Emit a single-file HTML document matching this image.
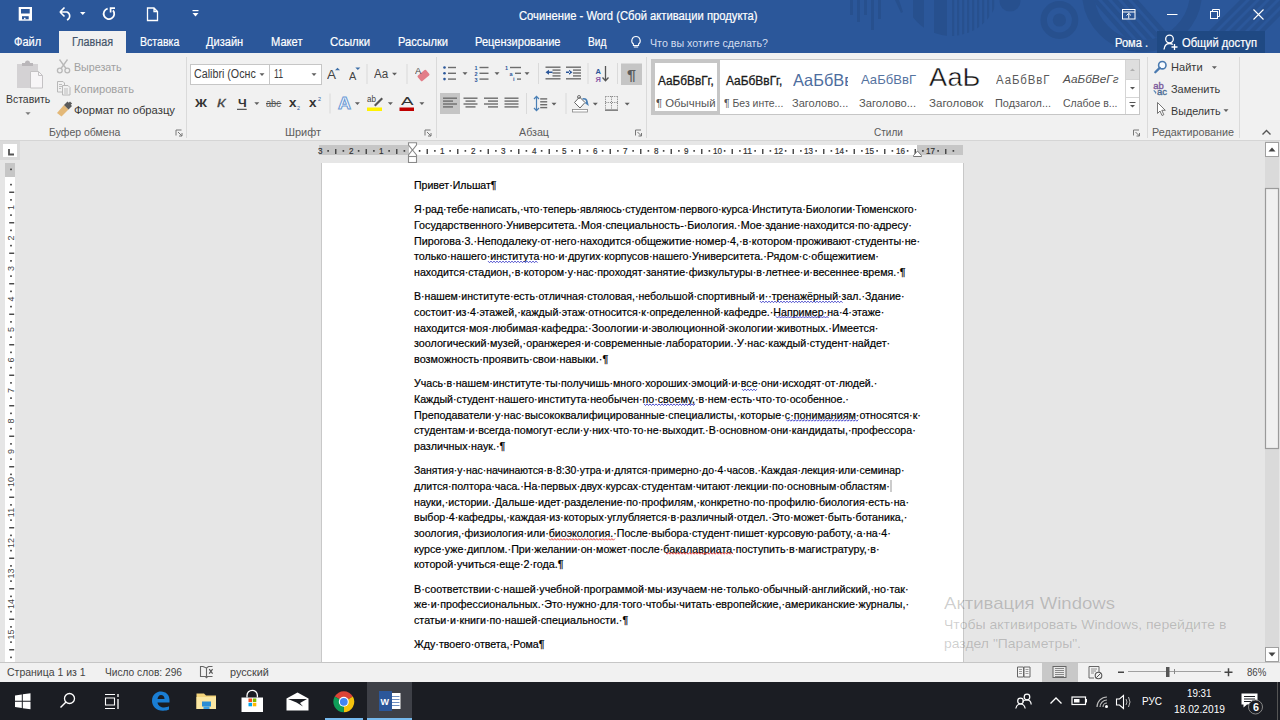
<!DOCTYPE html><html><head><meta charset="utf-8"><style>
*{margin:0;padding:0;box-sizing:border-box}
html,body{width:1280px;height:720px;overflow:hidden;background:#e6e6e6;font-family:"Liberation Sans",sans-serif;position:relative}
.a{position:absolute}
.t{position:absolute;white-space:pre;transform-origin:0 0}
svg{position:absolute;overflow:visible}
</style></head><body><div class="a" style="left:0px;top:0px;width:1280px;height:53px;background:#2b579a"></div>
<div class="a" style="left:0px;top:53px;width:1280px;height:87px;background:#f1f1f1"></div>
<div class="a" style="left:0px;top:140px;width:1280px;height:1px;background:#d5d5d5"></div>
<div class="a" style="left:0px;top:141px;width:1280px;height:521px;background:#e6e6e6"></div>
<div class="a" style="left:0px;top:662px;width:1280px;height:1px;background:#c6c6c6"></div>
<div class="a" style="left:0px;top:663px;width:1280px;height:20px;background:#f1f1f1"></div>
<div class="a" style="left:0px;top:682px;width:1280px;height:38px;background:#1b1d23"></div>
<svg style="left:0;top:0" width="1280" height="53"><rect x="850" y="0" width="3" height="15" fill="#27508e"/><rect x="857" y="0" width="3" height="22" fill="#27508e"/><rect x="864" y="0" width="3" height="15" fill="#27508e"/><rect x="871" y="0" width="3" height="30" fill="#27508e"/><rect x="878" y="0" width="3" height="19" fill="#27508e"/><defs><clipPath id="hd"><circle cx="951" cy="-12" r="48"/></clipPath></defs><g clip-path="url(#hd)"><rect x="913" y="0" width="11" height="40" fill="#27508e"/><rect x="934" y="0" width="13" height="40" fill="#27508e"/><rect x="952" y="0" width="2.2" height="40" fill="#27508e"/><rect x="957" y="0" width="2.2" height="40" fill="#27508e"/><rect x="962" y="0" width="2.2" height="40" fill="#27508e"/><rect x="967" y="0" width="2.2" height="40" fill="#27508e"/><rect x="972" y="0" width="2.2" height="40" fill="#27508e"/><rect x="977" y="0" width="2.2" height="40" fill="#27508e"/><rect x="982" y="0" width="2.2" height="40" fill="#27508e"/><rect x="987" y="0" width="2.2" height="40" fill="#27508e"/><rect x="992" y="0" width="2.2" height="40" fill="#27508e"/></g><path d="M895 0 L899 0 L903 12 L901 13 Z" fill="#27508e"/><circle cx="1010" cy="1" r="10.5" fill="#27508e"/><circle cx="1059.4" cy="20" r="15.7" fill="none" stroke="#27508e" stroke-width="6.4"/><circle cx="1059.4" cy="20" r="6.6" fill="#27508e"/><circle cx="1142" cy="-8" r="54" fill="none" stroke="#27508e" stroke-width="12"/><defs><clipPath id="br"><circle cx="1142" cy="-8" r="48"/></clipPath></defs><g clip-path="url(#br)"><path d="M1092 0 L1098 0 L1138 45 L1132 45 Z" fill="#27508e"/><path d="M1102 0 L1108 0 L1148 45 L1142 45 Z" fill="#27508e"/><path d="M1112 0 L1118 0 L1158 45 L1152 45 Z" fill="#27508e"/><path d="M1122 0 L1128 0 L1168 45 L1162 45 Z" fill="#27508e"/><path d="M1132 0 L1138 0 L1178 45 L1172 45 Z" fill="#27508e"/></g><path d="M1240 0 L1246 0 L1214 32 L1208 32 Z" fill="#27508e"/><path d="M1250 0 L1256 0 L1224 32 L1218 32 Z" fill="#27508e"/><path d="M1260 0 L1266 0 L1234 32 L1228 32 Z" fill="#27508e"/><path d="M1270 0 L1276 0 L1244 32 L1238 32 Z" fill="#27508e"/><path d="M1280 0 L1286 0 L1254 32 L1248 32 Z" fill="#27508e"/><path d="M1290 0 L1296 0 L1264 32 L1258 32 Z" fill="#27508e"/></svg>
<svg style="left:0;top:0" width="1280" height="53"><rect x="18.7" y="7" width="13.3" height="13.7" fill="#fff"/><rect x="21" y="9" width="8.7" height="4.5" fill="#2b579a"/><rect x="22" y="16.2" width="6.7" height="3.1" fill="#2b579a"/><rect x="24" y="17.8" width="1.5" height="1.5" fill="#fff"/><path d="M60 12 L64.5 7.5 M60 12 L64.5 16.5 M60.5 12 H67 A5 4.5 0 0 1 67 20" fill="none" stroke="#fff" stroke-width="1.6"/><path d="M80 12 H85.5 L82.75 15 Z" fill="#fff"/><path d="M107.65 8.6 A5.3 5.3 0 1 0 113 10.3" fill="none" stroke="#fff" stroke-width="1.8"/><path d="M110.6 12.6 V8.1 H115" fill="none" stroke="#fff" stroke-width="1.7"/><path d="M147.5 8 H154 L157.5 11.5 V20.5 H147.5 Z M154 8 V11.5 H157.5" fill="none" stroke="#fff" stroke-width="1.3"/><rect x="192.5" y="10" width="6" height="1.2" fill="#fff"/><path d="M192.5 13 H198.5 L195.5 16.5 Z" fill="#fff"/><rect x="1122.5" y="9.5" width="12.5" height="9.5" fill="none" stroke="#fff" stroke-width="1"/><path d="M1122.5 12 H1135" stroke="#fff" stroke-width="1"/><path d="M1128.75 18.5 V13.5 M1126.5 15.5 L1128.75 13.3 L1131 15.5" fill="none" stroke="#fff" stroke-width="1"/><rect x="1167" y="14" width="10.5" height="1" fill="#fff"/><rect x="1210.5" y="11.5" width="7" height="7" fill="none" stroke="#fff" stroke-width="1"/><path d="M1212.5 11.5 V9.5 H1219.5 V16.5 H1217.5" fill="none" stroke="#fff" stroke-width="1"/><path d="M1253.5 9.5 L1263.5 19.5 M1263.5 9.5 L1253.5 19.5" stroke="#fff" stroke-width="1.1"/></svg>
<div class="t" style="left:519.00px;top:9.59px;font-size:12.3px;line-height:12.3px;color:#ffffff;font-weight:400;font-family:'Liberation Sans',sans-serif;transform:scaleX(0.9134);-webkit-text-stroke:0.2px #fff;">Сочинение - Word (Сбой активации продукта)</div>
<div class="a" style="left:59px;top:31px;width:67px;height:22px;background:#f1f1f1"></div>
<div class="t" style="left:13.80px;top:36.39px;font-size:12.3px;line-height:12.3px;color:#ffffff;font-weight:400;font-family:'Liberation Sans',sans-serif;transform:scaleX(0.8996);-webkit-text-stroke:0.2px #ffffff;">Файл</div>
<div class="t" style="left:71.50px;top:36.39px;font-size:12.3px;line-height:12.3px;color:#44546a;font-weight:400;font-family:'Liberation Sans',sans-serif;transform:scaleX(0.8758);-webkit-text-stroke:0.2px #44546a;">Главная</div>
<div class="t" style="left:139.50px;top:36.39px;font-size:12.3px;line-height:12.3px;color:#ffffff;font-weight:400;font-family:'Liberation Sans',sans-serif;transform:scaleX(0.8596);-webkit-text-stroke:0.2px #ffffff;">Вставка</div>
<div class="t" style="left:205.80px;top:36.39px;font-size:12.3px;line-height:12.3px;color:#ffffff;font-weight:400;font-family:'Liberation Sans',sans-serif;transform:scaleX(0.8998);-webkit-text-stroke:0.2px #ffffff;">Дизайн</div>
<div class="t" style="left:271.00px;top:36.39px;font-size:12.3px;line-height:12.3px;color:#ffffff;font-weight:400;font-family:'Liberation Sans',sans-serif;transform:scaleX(0.9048);-webkit-text-stroke:0.2px #ffffff;">Макет</div>
<div class="t" style="left:330.00px;top:36.39px;font-size:12.3px;line-height:12.3px;color:#ffffff;font-weight:400;font-family:'Liberation Sans',sans-serif;transform:scaleX(0.9239);-webkit-text-stroke:0.2px #ffffff;">Ссылки</div>
<div class="t" style="left:397.50px;top:36.39px;font-size:12.3px;line-height:12.3px;color:#ffffff;font-weight:400;font-family:'Liberation Sans',sans-serif;transform:scaleX(0.9057);-webkit-text-stroke:0.2px #ffffff;">Рассылки</div>
<div class="t" style="left:475.00px;top:36.39px;font-size:12.3px;line-height:12.3px;color:#ffffff;font-weight:400;font-family:'Liberation Sans',sans-serif;transform:scaleX(0.9004);-webkit-text-stroke:0.2px #ffffff;">Рецензирование</div>
<div class="t" style="left:587.50px;top:36.39px;font-size:12.3px;line-height:12.3px;color:#ffffff;font-weight:400;font-family:'Liberation Sans',sans-serif;transform:scaleX(0.8315);-webkit-text-stroke:0.2px #ffffff;">Вид</div>
<svg style="left:630px;top:35px" width="12" height="14" viewBox="0 0 12 14" ><path d="M6 1.5 A4.2 4.2 0 0 1 8.6 9 V10.5 H3.4 V9 A4.2 4.2 0 0 1 6 1.5 Z M3.8 12 H8.2" fill="none" stroke="#ffffff" stroke-width="1.1"/></svg>
<div class="t" style="left:649.50px;top:37.77px;font-size:11.5px;line-height:11.5px;color:#d4def0;font-weight:400;font-family:'Liberation Sans',sans-serif;transform:scaleX(0.9281);">Что вы хотите сделать?</div>
<div class="t" style="left:1115.00px;top:36.84px;font-size:12px;line-height:12px;color:#ffffff;font-weight:400;font-family:'Liberation Sans',sans-serif;transform:scaleX(0.9231);-webkit-text-stroke:0.2px #fff;">Рома .</div>
<div class="a" style="left:1157px;top:31px;width:108px;height:22px;background:#1f4983"></div>
<svg style="left:1163px;top:34px" width="16" height="17" viewBox="0 0 16 17" ><circle cx="6.5" cy="5" r="3.8" fill="none" stroke="#fff" stroke-width="1.3"/><path d="M1 15.5 C1.5 11 4 9.5 6.5 9.5 C8 9.5 9 10 9.8 10.6" fill="none" stroke="#fff" stroke-width="1.3"/><path d="M11.5 10 V16 M8.5 13 H14.5" stroke="#fff" stroke-width="1.3"/></svg>
<div class="t" style="left:1182.00px;top:36.84px;font-size:12px;line-height:12px;color:#ffffff;font-weight:400;font-family:'Liberation Sans',sans-serif;transform:scaleX(0.9302);-webkit-text-stroke:0.2px #fff;">Общий доступ</div>
<svg style="left:0;top:0" width="1280" height="141"><rect x="186" y="57" width="1" height="81" fill="#dadada"/><rect x="436" y="57" width="1" height="81" fill="#dadada"/><rect x="646" y="57" width="1" height="81" fill="#dadada"/><rect x="1147" y="57" width="1" height="81" fill="#dadada"/><rect x="1239" y="57" width="1" height="81" fill="#dadada"/><rect x="17" y="64" width="21" height="24" fill="#d4d2d4"/><path d="M22 66 H33 V63 H30 A2.5 2.5 0 0 0 25 63 H22 Z" fill="#b9b6b9"/><path d="M30.5 71.5 H38.5 L42.5 75.5 V88 H30.5 Z" fill="#f7f5f7" stroke="#c4c2c4" stroke-width="1"/><path d="M38.5 71.5 V75.5 H42.5" fill="none" stroke="#c4c2c4" stroke-width="1"/><path d="M25.40 112.20 H30.60 L28.00 115.00 Z" fill="#7a7a7a"/><circle cx="59.8" cy="70.5" r="2.4" fill="none" stroke="#b8b8b8" stroke-width="1.3"/><circle cx="67.3" cy="70.5" r="2.4" fill="none" stroke="#b8b8b8" stroke-width="1.3"/><path d="M61 68.5 L67.5 59.5 M66 68.5 L59.5 59.5" stroke="#b8b8b8" stroke-width="1.3"/><path d="M57.5 81.5 H63 L64.5 83 V92 H57.5 Z" fill="none" stroke="#b8b8b8" stroke-width="1"/><path d="M62.5 85.5 H68 L70 87.5 V95 H62.5 Z" fill="#f1f1f1" stroke="#b8b8b8" stroke-width="1"/><path d="M59 84.5 H62 M59 86.5 H62 M59 88.5 H61 M64 89 H68 M64 91 H68 M64 93 H68" stroke="#b8b8b8" stroke-width="0.9"/><path d="M57 113 L64 105 L68.5 109.5 L61.5 116.5 Z" fill="#e3b878"/><path d="M64 105 L67.5 101.5 L72 106 L68.5 109.5 Z" fill="#5a5a5a"/><rect x="68.5" y="102" width="3" height="3" fill="#5a5a5a" transform="rotate(45 70 103.5)"/><path d="M176.0 135.5 V130.0 H181.5 M178.0 132.0 L182.0 136.0 M179.0 136.0 H182.0 V133.0" fill="none" stroke="#777" stroke-width="1"/><rect x="190.5" y="64.5" width="131" height="20" fill="#ffffff" stroke="#c6c6c6" stroke-width="1"/><rect x="269" y="65" width="1" height="19" fill="#c6c6c6"/><path d="M259.50 73.20 H264.50 L262.00 76.00 Z" fill="#5f5f5f"/><path d="M311.50 73.20 H316.50 L314.00 76.00 Z" fill="#5f5f5f"/><rect x="366.5" y="64" width="1" height="20" fill="#dadada"/><rect x="406.5" y="64" width="1" height="20" fill="#dadada"/><rect x="329.5" y="93.5" width="1" height="20" fill="#dadada"/><path d="M337.5 67.8 L340 70.3 H335 Z" fill="#3d6fa8"/><path d="M355.3 67.5 H360.3 L357.8 70 Z" fill="#3d6fa8"/><path d="M392.00 72.70 H397.00 L394.50 75.50 Z" fill="#5f5f5f"/><rect x="418" y="72" width="11" height="7" rx="1.2" fill="#e27d88" transform="rotate(-40 423.5 75.5)"/><path d="M417.4 78.2 L420.3 81.4" stroke="#f1f1f1" stroke-width="1"/><path d="M254.30 102.20 H259.30 L256.80 105.00 Z" fill="#5f5f5f"/><path d="M354.90 102.20 H359.90 L357.40 105.00 Z" fill="#5f5f5f"/><path d="M387.90 102.20 H392.90 L390.40 105.00 Z" fill="#5f5f5f"/><path d="M419.40 102.20 H424.40 L421.90 105.00 Z" fill="#5f5f5f"/><rect x="237" y="108.8" width="9.7" height="1" fill="#333"/><rect x="266" y="103" width="15.5" height="1" fill="#555"/><rect x="367" y="107.5" width="15" height="3.5" fill="#fff200"/><path d="M374 105 L381.5 97.5 L383 99 L375.5 106.5 Z" fill="#555"/><rect x="399.5" y="107.5" width="14.5" height="3.5" fill="#c00000"/><path d="M425.0 135.5 V130.0 H430.5 M427.0 132.0 L431.0 136.0 M428.0 136.0 H431.0 V133.0" fill="none" stroke="#777" stroke-width="1"/><circle cx="444.5" cy="67.5" r="1.3" fill="#2b579a"/><circle cx="444.5" cy="73.3" r="1.3" fill="#2b579a"/><circle cx="444.5" cy="79.1" r="1.3" fill="#2b579a"/><rect x="448.0" y="66.8" width="8.0" height="1.4" fill="#6d6d6d"/><rect x="448.0" y="72.6" width="8.0" height="1.4" fill="#6d6d6d"/><rect x="448.0" y="78.4" width="8.0" height="1.4" fill="#6d6d6d"/><path d="M462.50 72.20 H467.50 L465.00 75.00 Z" fill="#5f5f5f"/><text x="474.5" y="70" font-size="5.5" fill="#2b579a" font-family="Liberation Sans" font-weight="bold">1</text><text x="474.5" y="76" font-size="5.5" fill="#2b579a" font-family="Liberation Sans" font-weight="bold">2</text><text x="474.5" y="82" font-size="5.5" fill="#2b579a" font-family="Liberation Sans" font-weight="bold">3</text><rect x="479.5" y="66.8" width="9.0" height="1.4" fill="#6d6d6d"/><rect x="479.5" y="72.6" width="9.0" height="1.4" fill="#6d6d6d"/><rect x="479.5" y="78.4" width="9.0" height="1.4" fill="#6d6d6d"/><path d="M494.50 72.20 H499.50 L497.00 75.00 Z" fill="#5f5f5f"/><text x="505" y="70" font-size="5.5" fill="#2b579a" font-family="Liberation Sans" font-weight="bold">1</text><text x="509.5" y="75.5" font-size="5.5" fill="#2b579a" font-family="Liberation Sans" font-weight="bold">a</text><text x="513" y="81" font-size="5.5" fill="#2b579a" font-family="Liberation Sans" font-weight="bold">i</text><rect x="510.0" y="66.8" width="11.0" height="1.4" fill="#6d6d6d"/><rect x="515.0" y="72.6" width="6.0" height="1.4" fill="#6d6d6d"/><rect x="517.0" y="78.4" width="4.0" height="1.4" fill="#6d6d6d"/><path d="M524.50 72.20 H529.50 L527.00 75.00 Z" fill="#5f5f5f"/><rect x="538" y="63" width="1" height="21" fill="#dadada"/><rect x="545.5" y="66.5" width="15.0" height="1.4" fill="#6d6d6d"/><rect x="552.5" y="69.4" width="8.0" height="1.4" fill="#6d6d6d"/><rect x="552.5" y="72.3" width="8.0" height="1.4" fill="#6d6d6d"/><rect x="552.5" y="75.2" width="8.0" height="1.4" fill="#6d6d6d"/><rect x="545.5" y="78.1" width="15.0" height="1.4" fill="#6d6d6d"/><path d="M545.5 72.3 L549 69.8 V74.8 Z M548 71.6 H552.5 V73 H548 Z" fill="#2b579a"/><rect x="566.0" y="66.5" width="15.0" height="1.4" fill="#6d6d6d"/><rect x="573.0" y="69.4" width="8.0" height="1.4" fill="#6d6d6d"/><rect x="573.0" y="72.3" width="8.0" height="1.4" fill="#6d6d6d"/><rect x="573.0" y="75.2" width="8.0" height="1.4" fill="#6d6d6d"/><rect x="566.0" y="78.1" width="15.0" height="1.4" fill="#6d6d6d"/><path d="M572.5 72.3 L569 69.8 V74.8 Z M566 71.6 H570 V73 H566 Z" fill="#2b579a"/><rect x="587.5" y="63" width="1" height="21" fill="#dadada"/><text x="595.5" y="74" font-size="7.5" fill="#2b579a" font-family="Liberation Sans" font-weight="bold">A</text><text x="595.5" y="82" font-size="7.5" fill="#8a5aa8" font-family="Liberation Sans" font-weight="bold">Я</text><path d="M605.5 66 V80.5 M602.5 77.5 L605.5 80.8 L608.5 77.5" fill="none" stroke="#555" stroke-width="1.3"/><rect x="617" y="63" width="1" height="21" fill="#dadada"/><rect x="621" y="63.5" width="21" height="21.5" fill="#c5c5c5"/><rect x="440" y="93" width="20" height="21" fill="#c5c5c5"/><rect x="443.0" y="97.5" width="14.0" height="1.4" fill="#6d6d6d"/><rect x="443.0" y="100.4" width="10.0" height="1.4" fill="#6d6d6d"/><rect x="443.0" y="103.3" width="14.0" height="1.4" fill="#6d6d6d"/><rect x="443.0" y="106.2" width="10.0" height="1.4" fill="#6d6d6d"/><rect x="463.5" y="97.5" width="14.0" height="1.4" fill="#6d6d6d"/><rect x="465.5" y="100.4" width="10.0" height="1.4" fill="#6d6d6d"/><rect x="463.5" y="103.3" width="14.0" height="1.4" fill="#6d6d6d"/><rect x="465.5" y="106.2" width="10.0" height="1.4" fill="#6d6d6d"/><rect x="484.0" y="97.5" width="14.0" height="1.4" fill="#6d6d6d"/><rect x="488.0" y="100.4" width="10.0" height="1.4" fill="#6d6d6d"/><rect x="484.0" y="103.3" width="14.0" height="1.4" fill="#6d6d6d"/><rect x="488.0" y="106.2" width="10.0" height="1.4" fill="#6d6d6d"/><rect x="504.5" y="97.5" width="14.0" height="1.4" fill="#6d6d6d"/><rect x="504.5" y="100.4" width="14.0" height="1.4" fill="#6d6d6d"/><rect x="504.5" y="103.3" width="14.0" height="1.4" fill="#6d6d6d"/><rect x="504.5" y="106.2" width="14.0" height="1.4" fill="#6d6d6d"/><rect x="526" y="93" width="1" height="21" fill="#dadada"/><path d="M536.5 96.5 V110.5 M534 99 L536.5 96.3 L539 99 M534 108 L536.5 110.7 L539 108" fill="none" stroke="#4a7fb5" stroke-width="1.2"/><rect x="540.2" y="98.2" width="7.0" height="1.4" fill="#6d6d6d"/><rect x="540.2" y="101.1" width="7.0" height="1.4" fill="#6d6d6d"/><rect x="540.2" y="104.0" width="7.0" height="1.4" fill="#6d6d6d"/><rect x="540.2" y="106.9" width="7.0" height="1.4" fill="#6d6d6d"/><path d="M551.50 102.70 H556.50 L554.00 105.50 Z" fill="#5f5f5f"/><rect x="565.5" y="93" width="1" height="21" fill="#dadada"/><path d="M574.5 102.5 L579.5 97 L585 102.5 L580 108 Z" fill="#fff" stroke="#666" stroke-width="1"/><circle cx="579" cy="97" r="1.5" fill="none" stroke="#666" stroke-width="0.9"/><path d="M582.5 99 Q586.5 98 587 102 L587.5 104 L585.5 102.5" fill="none" stroke="#4a7fb5" stroke-width="1.6"/><rect x="572.5" y="109.5" width="15" height="2.5" fill="#fff" stroke="#888" stroke-width="0.8"/><path d="M592.80 102.70 H597.80 L595.30 105.50 Z" fill="#5f5f5f"/><path d="M605.5 96.5 H617.5 M605.5 96.5 V109 M617.5 96.5 V109 M611.5 96.5 V109 M605.5 102.5 H617.5" fill="none" stroke="#7a7a7a" stroke-width="1" stroke-dasharray="1 1.2"/><rect x="605" y="109.5" width="13" height="1.2" fill="#555"/><path d="M624.70 102.70 H629.70 L627.20 105.50 Z" fill="#5f5f5f"/><path d="M635.5 135.5 V130.0 H641.0 M637.5 132.0 L641.5 136.0 M638.5 136.0 H641.5 V133.0" fill="none" stroke="#777" stroke-width="1"/><rect x="651.5" y="59.5" width="488" height="55" fill="#ffffff" stroke="#c6c6c6" stroke-width="1"/><rect x="653.5" y="61.5" width="65" height="51" fill="none" stroke="#c6c6c6" stroke-width="3"/><rect x="1125" y="60" width="14" height="54" fill="#ffffff"/><rect x="1125" y="60" width="1" height="54" fill="#d5d5d5"/><rect x="1126" y="60" width="13" height="19" fill="#dedede"/><rect x="1126" y="79" width="13" height="1" fill="#d5d5d5"/><rect x="1126" y="97" width="13" height="1" fill="#d5d5d5"/><path d="M1130 71 H1135 L1132.5 68.5 Z" fill="#b0b0b0"/><path d="M1130 87 H1135 L1132.5 89.5 Z" fill="#555"/><rect x="1129.5" y="102" width="6" height="1" fill="#555"/><path d="M1130 105 H1135 L1132.5 107.5 Z" fill="#555"/><path d="M1133.5 135.5 V130.0 H1139.0 M1135.5 132.0 L1139.5 136.0 M1136.5 136.0 H1139.5 V133.0" fill="none" stroke="#777" stroke-width="1"/><circle cx="1162.3" cy="65.2" r="3.7" fill="#f7fbff" stroke="#4a7ab0" stroke-width="1.6"/><path d="M1159.7 67.9 L1155.3 72.2" stroke="#4a7ab0" stroke-width="2.3" stroke-linecap="round"/><path d="M1211.90 66.20 H1216.90 L1214.40 69.00 Z" fill="#5f5f5f"/><text x="1153.3" y="88.6" font-size="9.5" fill="#7b5a9c" stroke="#7b5a9c" stroke-width="0.35" font-family="Liberation Sans">ab</text><text x="1157" y="95" font-size="9.5" fill="#4a6d94" stroke="#4a6d94" stroke-width="0.35" font-family="Liberation Sans">ac</text><path d="M1154 90 Q1154 92.5 1156 92.5 M1155 91.5 L1156.2 92.5 L1155 93.5" fill="none" stroke="#4a7ab0" stroke-width="0.9"/><path d="M1157.5 102.5 V113.5 L1160 111 L1162 115.5 L1163.8 114.7 L1161.8 110.3 L1165.3 110.3 Z" fill="#fff" stroke="#666" stroke-width="0.9"/><path d="M1223.50 109.20 H1228.50 L1226.00 112.00 Z" fill="#5f5f5f"/><path d="M1262.5 134.5 L1266.5 130.5 L1270.5 134.5" fill="none" stroke="#555" stroke-width="1.4"/></svg>
<div class="t" style="left:6.00px;top:94.27px;font-size:11.5px;line-height:11.5px;color:#383838;font-weight:400;font-family:'Liberation Sans',sans-serif;transform:scaleX(0.9087);">Вставить</div>
<div class="t" style="left:74.00px;top:62.27px;font-size:11.5px;line-height:11.5px;color:#a0a0a0;font-weight:400;font-family:'Liberation Sans',sans-serif;transform:scaleX(0.9285);">Вырезать</div>
<div class="t" style="left:74.00px;top:83.77px;font-size:11.5px;line-height:11.5px;color:#a0a0a0;font-weight:400;font-family:'Liberation Sans',sans-serif;transform:scaleX(0.9690);">Копировать</div>
<div class="t" style="left:74.00px;top:105.27px;font-size:11.5px;line-height:11.5px;color:#383838;font-weight:400;font-family:'Liberation Sans',sans-serif;transform:scaleX(0.9794);">Формат по образцу</div>
<div class="t" style="left:49.00px;top:127.27px;font-size:11.5px;line-height:11.5px;color:#5c5c5c;font-weight:400;font-family:'Liberation Sans',sans-serif;transform:scaleX(0.9123);">Буфер обмена</div>
<div class="t" style="left:193.80px;top:68.42px;font-size:12.5px;line-height:12.5px;color:#3a3a3a;font-weight:400;font-family:'Liberation Sans',sans-serif;transform:scaleX(0.8561);">Calibri (Оснс</div>
<div class="t" style="left:273.50px;top:68.42px;font-size:12.5px;line-height:12.5px;color:#3a3a3a;font-weight:400;font-family:'Liberation Sans',sans-serif;transform:scaleX(0.7008);">11</div>
<div class="t" style="left:327.00px;top:68.92px;font-size:12.5px;line-height:12.5px;color:#444;font-weight:400;font-family:'Liberation Sans',sans-serif;transform:scaleX(1.0787);">A</div>
<div class="t" style="left:349.00px;top:70.71px;font-size:10.5px;line-height:10.5px;color:#444;font-weight:400;font-family:'Liberation Sans',sans-serif;transform:scaleX(1.0405);">A</div>
<div class="t" style="left:373.80px;top:67.84px;font-size:12px;line-height:12px;color:#444;font-weight:400;font-family:'Liberation Sans',sans-serif;transform:scaleX(0.9668);">Aa</div>
<div class="t" style="left:414.80px;top:66.88px;font-size:9px;line-height:9px;color:#444;font-weight:400;font-family:'Liberation Sans',sans-serif;transform:scaleX(1.0473);">A</div>
<div class="t" style="left:194.50px;top:97.77px;font-size:11.5px;line-height:11.5px;color:#333;font-weight:700;font-family:'Liberation Sans',sans-serif;transform:scaleX(1.1532);">Ж</div>
<div class="t" style="left:216.50px;top:97.77px;font-size:11.5px;line-height:11.5px;color:#444;font-weight:400;font-family:'Liberation Sans',sans-serif;transform:scaleX(1.2535);font-style:italic;-webkit-text-stroke:0.3px #444;">К</div>
<div class="t" style="left:237.50px;top:97.77px;font-size:11.5px;line-height:11.5px;color:#333;font-weight:700;font-family:'Liberation Sans',sans-serif;transform:scaleX(1.0749);">Ч</div>
<div class="t" style="left:266.40px;top:98.11px;font-size:10.5px;line-height:10.5px;color:#555;font-weight:400;font-family:'Liberation Sans',sans-serif;transform:scaleX(0.8738);">abc</div>
<div class="t" style="left:288.70px;top:96.84px;font-size:12px;line-height:12px;color:#333;font-weight:700;font-family:'Liberation Sans',sans-serif;transform:scaleX(1.1215);">x</div>
<div class="t" style="left:297.00px;top:104.92px;font-size:6px;line-height:6px;color:#2b579a;font-weight:400;font-family:'Liberation Sans',sans-serif;transform:scaleX(0.8972);">2</div>
<div class="t" style="left:309.00px;top:96.84px;font-size:12px;line-height:12px;color:#333;font-weight:700;font-family:'Liberation Sans',sans-serif;transform:scaleX(1.1215);">x</div>
<div class="t" style="left:317.50px;top:95.92px;font-size:6px;line-height:6px;color:#2b579a;font-weight:400;font-family:'Liberation Sans',sans-serif;transform:scaleX(0.8972);">2</div>
<div class="t" style="left:367.00px;top:95.38px;font-size:9px;line-height:9px;color:#444;font-weight:400;font-family:'Liberation Sans',sans-serif;transform:scaleX(0.8986);">ab</div>
<div class="t" style="left:400.50px;top:96.27px;font-size:11.5px;line-height:11.5px;color:#333;font-weight:400;font-family:'Liberation Sans',sans-serif;transform:scaleX(1.6293);">A</div>
<div class="t" style="left:337.80px;top:95.03px;font-size:16.5px;line-height:16.5px;color:#ffffff;font-weight:700;font-family:'Liberation Sans',sans-serif;transform:scaleX(1.0904);-webkit-text-stroke:1px #6d9bd6;">A</div>
<div class="t" style="left:285.00px;top:127.27px;font-size:11.5px;line-height:11.5px;color:#5c5c5c;font-weight:400;font-family:'Liberation Sans',sans-serif;transform:scaleX(0.9513);">Шрифт</div>
<div class="t" style="left:518.50px;top:127.27px;font-size:11.5px;line-height:11.5px;color:#5c5c5c;font-weight:400;font-family:'Liberation Sans',sans-serif;transform:scaleX(0.9298);">Абзац</div>
<div class="t" style="left:626.50px;top:68.15px;font-size:14px;line-height:14px;color:#5c5c5c;font-weight:700;font-family:'Liberation Sans',sans-serif;transform:scaleX(1.1543);">¶</div>
<div class="t" style="left:658.00px;top:75.34px;font-size:12px;line-height:12px;color:#1a1a1a;font-weight:400;font-family:'Liberation Sans',sans-serif;transform:scaleX(0.9826);-webkit-text-stroke:0.3px #1a1a1a;">АаБбВвГг,</div>
<div class="t" style="left:656.00px;top:98.27px;font-size:11.5px;line-height:11.5px;color:#555;font-weight:400;font-family:'Liberation Sans',sans-serif;transform:scaleX(0.9883);">¶ Обычный</div>
<div class="t" style="left:725.70px;top:75.34px;font-size:12px;line-height:12px;color:#1a1a1a;font-weight:400;font-family:'Liberation Sans',sans-serif;transform:scaleX(0.9932);-webkit-text-stroke:0.3px #1a1a1a;">АаБбВвГг,</div>
<div class="t" style="left:723.70px;top:98.27px;font-size:11.5px;line-height:11.5px;color:#555;font-weight:400;font-family:'Liberation Sans',sans-serif;transform:scaleX(0.9062);">¶ Без инте...</div>
<div class="t" style="left:793.00px;top:72.03px;font-size:16.5px;line-height:16.5px;color:#4d6d9e;font-weight:400;font-family:'Liberation Sans',sans-serif;transform:scaleX(0.9930);">АаБбВв</div>
<div class="a" style="left:848px;top:64px;width:9px;height:26px;background:#fff"></div>
<div class="t" style="left:791.70px;top:98.27px;font-size:11.5px;line-height:11.5px;color:#555;font-weight:400;font-family:'Liberation Sans',sans-serif;transform:scaleX(0.9603);">Заголово...</div>
<div class="t" style="left:860.70px;top:72.57px;font-size:13.5px;line-height:13.5px;color:#55739f;font-weight:400;font-family:'Liberation Sans',sans-serif;transform:scaleX(0.9692);">АаБбВвГ</div>
<div class="t" style="left:859.00px;top:98.27px;font-size:11.5px;line-height:11.5px;color:#555;font-weight:400;font-family:'Liberation Sans',sans-serif;transform:scaleX(0.9723);">Заголово...</div>
<div class="t" style="left:928.70px;top:63.57px;font-size:26.5px;line-height:26.5px;color:#111;font-weight:400;font-family:'Liberation Sans',sans-serif;transform:scaleX(1.0238);-webkit-text-stroke:0.45px #fff;">АаЬ</div>
<div class="t" style="left:928.70px;top:98.27px;font-size:11.5px;line-height:11.5px;color:#555;font-weight:400;font-family:'Liberation Sans',sans-serif;transform:scaleX(1.0041);">Заголовок</div>
<div class="t" style="left:995.70px;top:73.92px;font-size:12.5px;line-height:12.5px;color:#5a5a5a;font-weight:400;font-family:'Liberation Sans',sans-serif;transform:scaleX(0.9119);letter-spacing:1px;">АаБбВвГ</div>
<div class="t" style="left:995.00px;top:98.27px;font-size:11.5px;line-height:11.5px;color:#555;font-weight:400;font-family:'Liberation Sans',sans-serif;transform:scaleX(0.9464);">Подзагол...</div>
<div class="t" style="left:1062.50px;top:74.31px;font-size:11.8px;line-height:11.8px;color:#505050;font-weight:400;font-family:'Liberation Sans',sans-serif;transform:scaleX(1.0014);font-style:italic;">АаБбВеГг</div>
<div class="t" style="left:1063.00px;top:98.27px;font-size:11.5px;line-height:11.5px;color:#555;font-weight:400;font-family:'Liberation Sans',sans-serif;transform:scaleX(0.9131);">Слабое в...</div>
<div class="t" style="left:873.70px;top:127.27px;font-size:11.5px;line-height:11.5px;color:#5c5c5c;font-weight:400;font-family:'Liberation Sans',sans-serif;transform:scaleX(0.8690);">Стили</div>
<div class="t" style="left:1171.00px;top:62.27px;font-size:11.5px;line-height:11.5px;color:#383838;font-weight:400;font-family:'Liberation Sans',sans-serif;transform:scaleX(0.9626);">Найти</div>
<div class="t" style="left:1171.40px;top:84.27px;font-size:11.5px;line-height:11.5px;color:#383838;font-weight:400;font-family:'Liberation Sans',sans-serif;transform:scaleX(0.9519);">Заменить</div>
<div class="t" style="left:1171.00px;top:105.67px;font-size:11.5px;line-height:11.5px;color:#383838;font-weight:400;font-family:'Liberation Sans',sans-serif;transform:scaleX(0.9347);">Выделить</div>
<div class="t" style="left:1152.00px;top:127.27px;font-size:11.5px;line-height:11.5px;color:#5c5c5c;font-weight:400;font-family:'Liberation Sans',sans-serif;transform:scaleX(0.9360);">Редактирование</div>
<div class="a" style="left:0px;top:141px;width:20px;height:19px;background:#ffffff;border:3px solid #dadada;border-left-width:3px"></div>
<svg style="left:0px;top:140px" width="24" height="24" viewBox="0 0 24 24" ><path d="M9 9 V14.5 H14" fill="none" stroke="#555" stroke-width="1.8"/></svg>
<svg style="left:0px;top:0px" width="1280" height="170" viewBox="0 0 1280 170" ><rect x="319" y="145" width="644" height="10" fill="#c6c6c6"/><rect x="409" y="145" width="508" height="10" fill="#ffffff"/><rect x="327.32" y="150.1" width="1.6" height="1.6" fill="#333"/><rect x="335.05" y="149" width="1.4" height="5" fill="#444"/><rect x="342.57" y="150.1" width="1.6" height="1.6" fill="#333"/><rect x="357.82" y="150.1" width="1.6" height="1.6" fill="#333"/><rect x="365.55" y="149" width="1.4" height="5" fill="#444"/><rect x="373.07" y="150.1" width="1.6" height="1.6" fill="#333"/><rect x="388.32" y="150.1" width="1.6" height="1.6" fill="#333"/><rect x="396.05" y="149" width="1.4" height="5" fill="#444"/><rect x="403.57" y="150.1" width="1.6" height="1.6" fill="#333"/><rect x="418.82" y="150.1" width="1.6" height="1.6" fill="#333"/><rect x="426.55" y="149" width="1.4" height="5" fill="#444"/><rect x="434.07" y="150.1" width="1.6" height="1.6" fill="#333"/><rect x="449.32" y="150.1" width="1.6" height="1.6" fill="#333"/><rect x="457.05" y="149" width="1.4" height="5" fill="#444"/><rect x="464.57" y="150.1" width="1.6" height="1.6" fill="#333"/><rect x="479.82" y="150.1" width="1.6" height="1.6" fill="#333"/><rect x="487.55" y="149" width="1.4" height="5" fill="#444"/><rect x="495.07" y="150.1" width="1.6" height="1.6" fill="#333"/><rect x="510.32" y="150.1" width="1.6" height="1.6" fill="#333"/><rect x="518.05" y="149" width="1.4" height="5" fill="#444"/><rect x="525.58" y="150.1" width="1.6" height="1.6" fill="#333"/><rect x="540.83" y="150.1" width="1.6" height="1.6" fill="#333"/><rect x="548.55" y="149" width="1.4" height="5" fill="#444"/><rect x="556.08" y="150.1" width="1.6" height="1.6" fill="#333"/><rect x="571.33" y="150.1" width="1.6" height="1.6" fill="#333"/><rect x="579.05" y="149" width="1.4" height="5" fill="#444"/><rect x="586.58" y="150.1" width="1.6" height="1.6" fill="#333"/><rect x="601.83" y="150.1" width="1.6" height="1.6" fill="#333"/><rect x="609.55" y="149" width="1.4" height="5" fill="#444"/><rect x="617.08" y="150.1" width="1.6" height="1.6" fill="#333"/><rect x="632.33" y="150.1" width="1.6" height="1.6" fill="#333"/><rect x="640.05" y="149" width="1.4" height="5" fill="#444"/><rect x="647.58" y="150.1" width="1.6" height="1.6" fill="#333"/><rect x="662.83" y="150.1" width="1.6" height="1.6" fill="#333"/><rect x="670.55" y="149" width="1.4" height="5" fill="#444"/><rect x="678.08" y="150.1" width="1.6" height="1.6" fill="#333"/><rect x="693.33" y="150.1" width="1.6" height="1.6" fill="#333"/><rect x="701.05" y="149" width="1.4" height="5" fill="#444"/><rect x="708.58" y="150.1" width="1.6" height="1.6" fill="#333"/><rect x="723.83" y="150.1" width="1.6" height="1.6" fill="#333"/><rect x="731.55" y="149" width="1.4" height="5" fill="#444"/><rect x="739.08" y="150.1" width="1.6" height="1.6" fill="#333"/><rect x="754.33" y="150.1" width="1.6" height="1.6" fill="#333"/><rect x="762.05" y="149" width="1.4" height="5" fill="#444"/><rect x="769.58" y="150.1" width="1.6" height="1.6" fill="#333"/><rect x="784.83" y="150.1" width="1.6" height="1.6" fill="#333"/><rect x="792.55" y="149" width="1.4" height="5" fill="#444"/><rect x="800.08" y="150.1" width="1.6" height="1.6" fill="#333"/><rect x="815.33" y="150.1" width="1.6" height="1.6" fill="#333"/><rect x="823.05" y="149" width="1.4" height="5" fill="#444"/><rect x="830.58" y="150.1" width="1.6" height="1.6" fill="#333"/><rect x="845.83" y="150.1" width="1.6" height="1.6" fill="#333"/><rect x="853.55" y="149" width="1.4" height="5" fill="#444"/><rect x="861.08" y="150.1" width="1.6" height="1.6" fill="#333"/><rect x="876.33" y="150.1" width="1.6" height="1.6" fill="#333"/><rect x="884.05" y="149" width="1.4" height="5" fill="#444"/><rect x="891.58" y="150.1" width="1.6" height="1.6" fill="#333"/><rect x="906.83" y="150.1" width="1.6" height="1.6" fill="#333"/><rect x="914.55" y="149" width="1.4" height="5" fill="#444"/><rect x="922.08" y="150.1" width="1.6" height="1.6" fill="#333"/><rect x="937.33" y="150.1" width="1.6" height="1.6" fill="#333"/><rect x="945.05" y="149" width="1.4" height="5" fill="#444"/><rect x="952.58" y="150.1" width="1.6" height="1.6" fill="#333"/></svg>
<div class="t" style="left:318.25px;top:146.58px;font-size:9px;line-height:9px;color:#333;font-weight:400;font-family:'Liberation Sans',sans-serif;transform:scaleX(0.8972);-webkit-text-stroke:0.2px #333;">3</div>
<div class="t" style="left:348.75px;top:146.58px;font-size:9px;line-height:9px;color:#333;font-weight:400;font-family:'Liberation Sans',sans-serif;transform:scaleX(0.8972);-webkit-text-stroke:0.2px #333;">2</div>
<div class="t" style="left:379.25px;top:146.58px;font-size:9px;line-height:9px;color:#333;font-weight:400;font-family:'Liberation Sans',sans-serif;transform:scaleX(0.8972);-webkit-text-stroke:0.2px #333;">1</div>
<div class="t" style="left:440.25px;top:146.58px;font-size:9px;line-height:9px;color:#333;font-weight:400;font-family:'Liberation Sans',sans-serif;transform:scaleX(0.8972);-webkit-text-stroke:0.2px #333;">1</div>
<div class="t" style="left:470.75px;top:146.58px;font-size:9px;line-height:9px;color:#333;font-weight:400;font-family:'Liberation Sans',sans-serif;transform:scaleX(0.8972);-webkit-text-stroke:0.2px #333;">2</div>
<div class="t" style="left:501.25px;top:146.58px;font-size:9px;line-height:9px;color:#333;font-weight:400;font-family:'Liberation Sans',sans-serif;transform:scaleX(0.8972);-webkit-text-stroke:0.2px #333;">3</div>
<div class="t" style="left:531.75px;top:146.58px;font-size:9px;line-height:9px;color:#333;font-weight:400;font-family:'Liberation Sans',sans-serif;transform:scaleX(0.8972);-webkit-text-stroke:0.2px #333;">4</div>
<div class="t" style="left:562.25px;top:146.58px;font-size:9px;line-height:9px;color:#333;font-weight:400;font-family:'Liberation Sans',sans-serif;transform:scaleX(0.8972);-webkit-text-stroke:0.2px #333;">5</div>
<div class="t" style="left:592.75px;top:146.58px;font-size:9px;line-height:9px;color:#333;font-weight:400;font-family:'Liberation Sans',sans-serif;transform:scaleX(0.8972);-webkit-text-stroke:0.2px #333;">6</div>
<div class="t" style="left:623.25px;top:146.58px;font-size:9px;line-height:9px;color:#333;font-weight:400;font-family:'Liberation Sans',sans-serif;transform:scaleX(0.8972);-webkit-text-stroke:0.2px #333;">7</div>
<div class="t" style="left:653.75px;top:146.58px;font-size:9px;line-height:9px;color:#333;font-weight:400;font-family:'Liberation Sans',sans-serif;transform:scaleX(0.8972);-webkit-text-stroke:0.2px #333;">8</div>
<div class="t" style="left:684.25px;top:146.58px;font-size:9px;line-height:9px;color:#333;font-weight:400;font-family:'Liberation Sans',sans-serif;transform:scaleX(0.8972);-webkit-text-stroke:0.2px #333;">9</div>
<div class="t" style="left:712.50px;top:146.58px;font-size:9px;line-height:9px;color:#333;font-weight:400;font-family:'Liberation Sans',sans-serif;transform:scaleX(0.8986);-webkit-text-stroke:0.2px #333;">10</div>
<div class="t" style="left:743.00px;top:146.58px;font-size:9px;line-height:9px;color:#333;font-weight:400;font-family:'Liberation Sans',sans-serif;transform:scaleX(0.9632);-webkit-text-stroke:0.2px #333;">11</div>
<div class="t" style="left:773.50px;top:146.58px;font-size:9px;line-height:9px;color:#333;font-weight:400;font-family:'Liberation Sans',sans-serif;transform:scaleX(0.8986);-webkit-text-stroke:0.2px #333;">12</div>
<div class="t" style="left:804.00px;top:146.58px;font-size:9px;line-height:9px;color:#333;font-weight:400;font-family:'Liberation Sans',sans-serif;transform:scaleX(0.8986);-webkit-text-stroke:0.2px #333;">13</div>
<div class="t" style="left:834.50px;top:146.58px;font-size:9px;line-height:9px;color:#333;font-weight:400;font-family:'Liberation Sans',sans-serif;transform:scaleX(0.8986);-webkit-text-stroke:0.2px #333;">14</div>
<div class="t" style="left:865.00px;top:146.58px;font-size:9px;line-height:9px;color:#333;font-weight:400;font-family:'Liberation Sans',sans-serif;transform:scaleX(0.8986);-webkit-text-stroke:0.2px #333;">15</div>
<div class="t" style="left:895.50px;top:146.58px;font-size:9px;line-height:9px;color:#333;font-weight:400;font-family:'Liberation Sans',sans-serif;transform:scaleX(0.8986);-webkit-text-stroke:0.2px #333;">16</div>
<div class="t" style="left:926.00px;top:146.58px;font-size:9px;line-height:9px;color:#333;font-weight:400;font-family:'Liberation Sans',sans-serif;transform:scaleX(0.8986);-webkit-text-stroke:0.2px #333;">17</div>
<svg style="left:0px;top:0px" width="1280" height="170" viewBox="0 0 1280 170" ><path d="M408.5 142.8 H416.5 V145 L412.5 150 L408.5 145 Z" fill="#ffffff" stroke="#8a8a8a" stroke-width="1.1"/><path d="M412.5 150 L416.5 155 V156.5 H408.5 V155 Z" fill="#ffffff" stroke="#8a8a8a" stroke-width="1.1"/><rect x="408.5" y="156.5" width="8" height="6" fill="#ffffff" stroke="#8a8a8a" stroke-width="1.1"/><path d="M913.5 156.5 V155.5 L917.5 151 L921.5 155.5 V156.5 Z" fill="#ffffff" stroke="#777" stroke-width="1"/></svg>
<svg style="left:0px;top:0px" width="30" height="720" viewBox="0 0 30 720" ><rect x="5" y="163" width="10" height="499" fill="#ffffff"/><rect x="5" y="163" width="10" height="14" fill="#c6c6c6"/><rect x="10.2" y="168.57" width="1.6" height="1.6" fill="#333"/><rect x="10.2" y="183.82" width="1.6" height="1.6" fill="#333"/><rect x="9.2" y="191.55" width="5" height="1.4" fill="#444"/><rect x="10.2" y="199.07" width="1.6" height="1.6" fill="#333"/><rect x="10.2" y="214.32" width="1.6" height="1.6" fill="#333"/><rect x="9.2" y="222.05" width="5" height="1.4" fill="#444"/><rect x="10.2" y="229.57" width="1.6" height="1.6" fill="#333"/><text x="0" y="0" font-size="9" fill="#444" font-family="Liberation Sans" transform="translate(13.5 207.5) rotate(-90)" text-anchor="middle">1</text><rect x="10.2" y="244.82" width="1.6" height="1.6" fill="#333"/><rect x="9.2" y="252.55" width="5" height="1.4" fill="#444"/><rect x="10.2" y="260.07" width="1.6" height="1.6" fill="#333"/><text x="0" y="0" font-size="9" fill="#444" font-family="Liberation Sans" transform="translate(13.5 238.0) rotate(-90)" text-anchor="middle">2</text><rect x="10.2" y="275.32" width="1.6" height="1.6" fill="#333"/><rect x="9.2" y="283.05" width="5" height="1.4" fill="#444"/><rect x="10.2" y="290.57" width="1.6" height="1.6" fill="#333"/><text x="0" y="0" font-size="9" fill="#444" font-family="Liberation Sans" transform="translate(13.5 268.5) rotate(-90)" text-anchor="middle">3</text><rect x="10.2" y="305.82" width="1.6" height="1.6" fill="#333"/><rect x="9.2" y="313.55" width="5" height="1.4" fill="#444"/><rect x="10.2" y="321.07" width="1.6" height="1.6" fill="#333"/><text x="0" y="0" font-size="9" fill="#444" font-family="Liberation Sans" transform="translate(13.5 299.0) rotate(-90)" text-anchor="middle">4</text><rect x="10.2" y="336.32" width="1.6" height="1.6" fill="#333"/><rect x="9.2" y="344.05" width="5" height="1.4" fill="#444"/><rect x="10.2" y="351.57" width="1.6" height="1.6" fill="#333"/><text x="0" y="0" font-size="9" fill="#444" font-family="Liberation Sans" transform="translate(13.5 329.5) rotate(-90)" text-anchor="middle">5</text><rect x="10.2" y="366.82" width="1.6" height="1.6" fill="#333"/><rect x="9.2" y="374.55" width="5" height="1.4" fill="#444"/><rect x="10.2" y="382.07" width="1.6" height="1.6" fill="#333"/><text x="0" y="0" font-size="9" fill="#444" font-family="Liberation Sans" transform="translate(13.5 360.0) rotate(-90)" text-anchor="middle">6</text><rect x="10.2" y="397.32" width="1.6" height="1.6" fill="#333"/><rect x="9.2" y="405.05" width="5" height="1.4" fill="#444"/><rect x="10.2" y="412.57" width="1.6" height="1.6" fill="#333"/><text x="0" y="0" font-size="9" fill="#444" font-family="Liberation Sans" transform="translate(13.5 390.5) rotate(-90)" text-anchor="middle">7</text><rect x="10.2" y="427.82" width="1.6" height="1.6" fill="#333"/><rect x="9.2" y="435.55" width="5" height="1.4" fill="#444"/><rect x="10.2" y="443.07" width="1.6" height="1.6" fill="#333"/><text x="0" y="0" font-size="9" fill="#444" font-family="Liberation Sans" transform="translate(13.5 421.0) rotate(-90)" text-anchor="middle">8</text><rect x="10.2" y="458.32" width="1.6" height="1.6" fill="#333"/><rect x="9.2" y="466.05" width="5" height="1.4" fill="#444"/><rect x="10.2" y="473.57" width="1.6" height="1.6" fill="#333"/><text x="0" y="0" font-size="9" fill="#444" font-family="Liberation Sans" transform="translate(13.5 451.5) rotate(-90)" text-anchor="middle">9</text><rect x="10.2" y="488.82" width="1.6" height="1.6" fill="#333"/><rect x="9.2" y="496.55" width="5" height="1.4" fill="#444"/><rect x="10.2" y="504.07" width="1.6" height="1.6" fill="#333"/><text x="0" y="0" font-size="9" fill="#444" font-family="Liberation Sans" transform="translate(13.5 482.0) rotate(-90)" text-anchor="middle">10</text><rect x="10.2" y="519.33" width="1.6" height="1.6" fill="#333"/><rect x="9.2" y="527.05" width="5" height="1.4" fill="#444"/><rect x="10.2" y="534.58" width="1.6" height="1.6" fill="#333"/><text x="0" y="0" font-size="9" fill="#444" font-family="Liberation Sans" transform="translate(13.5 512.5) rotate(-90)" text-anchor="middle">11</text><rect x="10.2" y="549.83" width="1.6" height="1.6" fill="#333"/><rect x="9.2" y="557.55" width="5" height="1.4" fill="#444"/><rect x="10.2" y="565.08" width="1.6" height="1.6" fill="#333"/><text x="0" y="0" font-size="9" fill="#444" font-family="Liberation Sans" transform="translate(13.5 543.0) rotate(-90)" text-anchor="middle">12</text><rect x="10.2" y="580.33" width="1.6" height="1.6" fill="#333"/><rect x="9.2" y="588.05" width="5" height="1.4" fill="#444"/><rect x="10.2" y="595.58" width="1.6" height="1.6" fill="#333"/><text x="0" y="0" font-size="9" fill="#444" font-family="Liberation Sans" transform="translate(13.5 573.5) rotate(-90)" text-anchor="middle">13</text><rect x="10.2" y="610.83" width="1.6" height="1.6" fill="#333"/><rect x="9.2" y="618.55" width="5" height="1.4" fill="#444"/><rect x="10.2" y="626.08" width="1.6" height="1.6" fill="#333"/><text x="0" y="0" font-size="9" fill="#444" font-family="Liberation Sans" transform="translate(13.5 604.0) rotate(-90)" text-anchor="middle">14</text><rect x="10.2" y="641.33" width="1.6" height="1.6" fill="#333"/><rect x="9.2" y="649.05" width="5" height="1.4" fill="#444"/><rect x="10.2" y="656.58" width="1.6" height="1.6" fill="#333"/><text x="0" y="0" font-size="9" fill="#444" font-family="Liberation Sans" transform="translate(13.5 634.5) rotate(-90)" text-anchor="middle">15</text></svg>
<div class="a" style="left:321px;top:163px;width:1px;height:499px;background:#c8c8c8"></div>
<div class="a" style="left:963px;top:163px;width:1px;height:499px;background:#c8c8c8"></div>
<div class="a" style="left:322px;top:163px;width:641px;height:499px;background:#ffffff"></div>
<svg style="left:0px;top:0px" width="1280" height="720" viewBox="0 0 1280 720" ><rect x="1265" y="141" width="14" height="521" fill="#dadada"/><rect x="1265.5" y="142.5" width="13" height="14" fill="#ffffff" stroke="#a0a0a0" stroke-width="1"/><path d="M1268.5 151.5 H1275.5 L1272 147.5 Z" fill="#444"/><rect x="1265.5" y="188.5" width="13" height="260" fill="#f0f0f0" stroke="#9a9a9a" stroke-width="1.2"/><rect x="1265.5" y="647.5" width="13" height="14" fill="#ffffff" stroke="#a0a0a0" stroke-width="1"/><path d="M1268.5 652.5 H1275.5 L1272 656.5 Z" fill="#444"/></svg>
<div class="t" style="left:414.00px;top:180.09px;font-size:11px;line-height:11px;color:#000000;font-weight:400;font-family:'Liberation Sans',sans-serif;transform:scaleX(0.9588);-webkit-text-stroke:0.2px #000;">Привет·Ильшат¶</div>
<div class="t" style="left:414.00px;top:204.39px;font-size:11px;line-height:11px;color:#000000;font-weight:400;font-family:'Liberation Sans',sans-serif;transform:scaleX(0.9601);-webkit-text-stroke:0.2px #000;">Я·рад·тебе·написать,·что·теперь·являюсь·студентом·первого·курса·Института·Биологии·Тюменского·</div>
<div class="t" style="left:414.00px;top:220.05px;font-size:11px;line-height:11px;color:#000000;font-weight:400;font-family:'Liberation Sans',sans-serif;transform:scaleX(0.9739);-webkit-text-stroke:0.2px #000;">Государственного·Университета.·Моя·специальность-·Биология.·Мое·здание·находится·по·адресу·</div>
<div class="t" style="left:414.00px;top:235.72px;font-size:11px;line-height:11px;color:#000000;font-weight:400;font-family:'Liberation Sans',sans-serif;transform:scaleX(0.9771);-webkit-text-stroke:0.2px #000;">Пирогова·3.·Неподалеку·от·него·находится·общежитие·номер·4,·в·котором·проживают·студенты·не·</div>
<div class="t" style="left:414.00px;top:251.38px;font-size:11px;line-height:11px;color:#000000;font-weight:400;font-family:'Liberation Sans',sans-serif;transform:scaleX(0.9726);-webkit-text-stroke:0.2px #000;">только·нашего·института·но·и·других·корпусов·нашего·Университета.·Рядом·с·общежитием·</div>
<div class="t" style="left:414.00px;top:267.05px;font-size:11px;line-height:11px;color:#000000;font-weight:400;font-family:'Liberation Sans',sans-serif;transform:scaleX(0.9673);-webkit-text-stroke:0.2px #000;">находится·стадион,·в·котором·у·нас·проходят·занятие·физкультуры·в·летнее·и·весеннее·время.·¶</div>
<div class="t" style="left:414.00px;top:291.35px;font-size:11px;line-height:11px;color:#000000;font-weight:400;font-family:'Liberation Sans',sans-serif;transform:scaleX(0.9595);-webkit-text-stroke:0.2px #000;">В·нашем·институте·есть·отличная·столовая,·небольшой·спортивный·и··тренажёрный·зал.·Здание·</div>
<div class="t" style="left:414.00px;top:307.01px;font-size:11px;line-height:11px;color:#000000;font-weight:400;font-family:'Liberation Sans',sans-serif;transform:scaleX(0.9655);-webkit-text-stroke:0.2px #000;">состоит·из·4·этажей,·каждый·этаж·относится·к·определенной·кафедре.·Например·на·4·этаже·</div>
<div class="t" style="left:414.00px;top:322.68px;font-size:11px;line-height:11px;color:#000000;font-weight:400;font-family:'Liberation Sans',sans-serif;transform:scaleX(0.9806);-webkit-text-stroke:0.2px #000;">находится·моя·любимая·кафедра:·Зоологии·и·эволюционной·экологии·животных.·Имеется·</div>
<div class="t" style="left:414.00px;top:338.34px;font-size:11px;line-height:11px;color:#000000;font-weight:400;font-family:'Liberation Sans',sans-serif;transform:scaleX(0.9759);-webkit-text-stroke:0.2px #000;">зоологический·музей,·оранжерея·и·современные·лаборатории.·У·нас·каждый·студент·найдет·</div>
<div class="t" style="left:414.00px;top:354.01px;font-size:11px;line-height:11px;color:#000000;font-weight:400;font-family:'Liberation Sans',sans-serif;transform:scaleX(0.9861);-webkit-text-stroke:0.2px #000;">возможность·проявить·свои·навыки.·¶</div>
<div class="t" style="left:414.00px;top:378.31px;font-size:11px;line-height:11px;color:#000000;font-weight:400;font-family:'Liberation Sans',sans-serif;transform:scaleX(0.9646);-webkit-text-stroke:0.2px #000;">Учась·в·нашем·институте·ты·получишь·много·хороших·эмоций·и·все·они·исходят·от·людей.·</div>
<div class="t" style="left:414.00px;top:393.97px;font-size:11px;line-height:11px;color:#000000;font-weight:400;font-family:'Liberation Sans',sans-serif;transform:scaleX(0.9675);-webkit-text-stroke:0.2px #000;">Каждый·студент·нашего·института·необычен·по·своему,·в·нем·есть·что·то·особенное.·</div>
<div class="t" style="left:414.00px;top:409.64px;font-size:11px;line-height:11px;color:#000000;font-weight:400;font-family:'Liberation Sans',sans-serif;transform:scaleX(0.9749);-webkit-text-stroke:0.2px #000;">Преподаватели·у·нас·высококвалифицированные·специалисты,·которые·с·пониманиям·относятся·к·</div>
<div class="t" style="left:414.00px;top:425.30px;font-size:11px;line-height:11px;color:#000000;font-weight:400;font-family:'Liberation Sans',sans-serif;transform:scaleX(0.9661);-webkit-text-stroke:0.2px #000;">студентам·и·всегда·помогут·если·у·них·что·то·не·выходит.·В·основном·они·кандидаты,·профессора·</div>
<div class="t" style="left:414.00px;top:440.97px;font-size:11px;line-height:11px;color:#000000;font-weight:400;font-family:'Liberation Sans',sans-serif;transform:scaleX(0.9766);-webkit-text-stroke:0.2px #000;">различных·наук.·¶</div>
<div class="t" style="left:414.00px;top:465.27px;font-size:11px;line-height:11px;color:#000000;font-weight:400;font-family:'Liberation Sans',sans-serif;transform:scaleX(0.9486);-webkit-text-stroke:0.2px #000;">Занятия·у·нас·начинаются·в·8:30·утра·и·длятся·примерно·до·4·часов.·Каждая·лекция·или·семинар·</div>
<div class="t" style="left:414.00px;top:480.93px;font-size:11px;line-height:11px;color:#000000;font-weight:400;font-family:'Liberation Sans',sans-serif;transform:scaleX(0.9597);-webkit-text-stroke:0.2px #000;">длится·полтора·часа.·На·первых·двух·курсах·студентам·читают·лекции·по·основным·областям·</div>
<div class="t" style="left:414.00px;top:496.60px;font-size:11px;line-height:11px;color:#000000;font-weight:400;font-family:'Liberation Sans',sans-serif;transform:scaleX(0.9734);-webkit-text-stroke:0.2px #000;">науки,·истории.·Дальше·идет·разделение·по·профилям,·конкретно·по·профилю·биология·есть·на·</div>
<div class="t" style="left:414.00px;top:512.26px;font-size:11px;line-height:11px;color:#000000;font-weight:400;font-family:'Liberation Sans',sans-serif;transform:scaleX(0.9685);-webkit-text-stroke:0.2px #000;">выбор·4·кафедры,·каждая·из·которых·углубляется·в·различный·отдел.·Это·может·быть·ботаника,·</div>
<div class="t" style="left:414.00px;top:527.93px;font-size:11px;line-height:11px;color:#000000;font-weight:400;font-family:'Liberation Sans',sans-serif;transform:scaleX(0.9659);-webkit-text-stroke:0.2px #000;">зоология,·физиология·или·биоэкология.·После·выбора·студент·пишет·курсовую·работу,·а·на·4·</div>
<div class="t" style="left:414.00px;top:543.59px;font-size:11px;line-height:11px;color:#000000;font-weight:400;font-family:'Liberation Sans',sans-serif;transform:scaleX(0.9722);-webkit-text-stroke:0.2px #000;">курсе·уже·диплом.·При·желании·он·может·после·бакалавриата·поступить·в·магистратуру,·в·</div>
<div class="t" style="left:414.00px;top:559.26px;font-size:11px;line-height:11px;color:#000000;font-weight:400;font-family:'Liberation Sans',sans-serif;transform:scaleX(0.9777);-webkit-text-stroke:0.2px #000;">которой·учиться·еще·2·года.¶</div>
<div class="t" style="left:414.00px;top:583.56px;font-size:11px;line-height:11px;color:#000000;font-weight:400;font-family:'Liberation Sans',sans-serif;transform:scaleX(0.9751);-webkit-text-stroke:0.2px #000;">В·соответствии·с·нашей·учебной·программой·мы·изучаем·не·только·обычный·английский,·но·так·</div>
<div class="t" style="left:414.00px;top:599.22px;font-size:11px;line-height:11px;color:#000000;font-weight:400;font-family:'Liberation Sans',sans-serif;transform:scaleX(0.9710);-webkit-text-stroke:0.2px #000;">же·и·профессиональных.·Это·нужно·для·того·чтобы·читать·европейские,·американские·журналы,·</div>
<div class="t" style="left:414.00px;top:614.89px;font-size:11px;line-height:11px;color:#000000;font-weight:400;font-family:'Liberation Sans',sans-serif;transform:scaleX(0.9736);-webkit-text-stroke:0.2px #000;">статьи·и·книги·по·нашей·специальности.·¶</div>
<div class="t" style="left:414.00px;top:639.19px;font-size:11px;line-height:11px;color:#000000;font-weight:400;font-family:'Liberation Sans',sans-serif;transform:scaleX(0.9668);-webkit-text-stroke:0.2px #000;">Жду·твоего·ответа,·Рома¶</div>
<div class="t" style="left:944.00px;top:594.61px;font-size:17px;line-height:17px;color:rgba(0,0,0,0.2);font-weight:400;font-family:'Liberation Sans',sans-serif;transform:scaleX(1.0915);">Активация Windows</div>
<div class="t" style="left:944.00px;top:618.00px;font-size:13px;line-height:13px;color:rgba(0,0,0,0.2);font-weight:400;font-family:'Liberation Sans',sans-serif;transform:scaleX(1.0802);">Чтобы активировать Windows, перейдите в</div>
<div class="t" style="left:944.00px;top:636.50px;font-size:13px;line-height:13px;color:rgba(0,0,0,0.2);font-weight:400;font-family:'Liberation Sans',sans-serif;transform:scaleX(1.0727);">раздел "Параметры".</div>
<svg style="left:0px;top:0px" width="1280" height="720" viewBox="0 0 1280 720" ><polyline points="488.0,261.1 489.5,262.7 491.0,261.1 492.5,262.7 494.0,261.1 495.5,262.7 497.0,261.1 498.5,262.7 500.0,261.1 501.5,262.7 503.0,261.1 504.5,262.7 506.0,261.1 507.5,262.7 509.0,261.1 510.5,262.7 512.0,261.1 513.5,262.7 515.0,261.1 516.5,262.7 518.0,261.1 519.5,262.7 521.0,261.1 522.5,262.7 524.0,261.1 525.5,262.7 527.0,261.1 528.5,262.7 530.0,261.1 531.5,262.7 533.0,261.1 534.5,262.7 536.0,261.1 537.5,262.7" fill="none" stroke="#3c3cc8" stroke-width="0.9"/><polyline points="760.0,301.1 761.5,302.7 763.0,301.1 764.5,302.7 766.0,301.1 767.5,302.7 769.0,301.1 770.5,302.7 772.0,301.1 773.5,302.7 775.0,301.1 776.5,302.7 778.0,301.1 779.5,302.7 781.0,301.1 782.5,302.7 784.0,301.1 785.5,302.7 787.0,301.1 788.5,302.7 790.0,301.1 791.5,302.7 793.0,301.1 794.5,302.7 796.0,301.1 797.5,302.7 799.0,301.1 800.5,302.7 802.0,301.1 803.5,302.7 805.0,301.1 806.5,302.7 808.0,301.1 809.5,302.7 811.0,301.1 812.5,302.7 814.0,301.1 815.5,302.7 817.0,301.1 818.5,302.7 820.0,301.1 821.5,302.7 823.0,301.1 824.5,302.7 826.0,301.1 827.5,302.7 829.0,301.1 830.5,302.7 832.0,301.1 833.5,302.7 835.0,301.1 836.5,302.7 838.0,301.1 839.5,302.7 841.0,301.1 842.5,302.7" fill="none" stroke="#3c3cc8" stroke-width="0.9"/><polyline points="776.0,316.4 777.5,318.0 779.0,316.4 780.5,318.0 782.0,316.4 783.5,318.0 785.0,316.4 786.5,318.0 788.0,316.4 789.5,318.0 791.0,316.4 792.5,318.0 794.0,316.4 795.5,318.0 797.0,316.4 798.5,318.0 800.0,316.4 801.5,318.0 803.0,316.4 804.5,318.0 806.0,316.4 807.5,318.0 809.0,316.4 810.5,318.0 812.0,316.4 813.5,318.0 815.0,316.4 816.5,318.0 818.0,316.4 819.5,318.0 821.0,316.4 822.5,318.0 824.0,316.4 825.5,318.0 827.0,316.4 828.5,318.0" fill="none" stroke="#3c3cc8" stroke-width="0.9"/><polyline points="742.0,389.1 743.5,390.7 745.0,389.1 746.5,390.7 748.0,389.1 749.5,390.7 751.0,389.1 752.5,390.7 754.0,389.1 755.5,390.7 757.0,389.1" fill="none" stroke="#3c3cc8" stroke-width="0.9"/><polyline points="644.0,403.9 645.5,405.5 647.0,403.9 648.5,405.5 650.0,403.9 651.5,405.5 653.0,403.9 654.5,405.5 656.0,403.9 657.5,405.5 659.0,403.9 660.5,405.5 662.0,403.9 663.5,405.5 665.0,403.9 666.5,405.5 668.0,403.9 669.5,405.5 671.0,403.9 672.5,405.5 674.0,403.9 675.5,405.5 677.0,403.9 678.5,405.5 680.0,403.9 681.5,405.5 683.0,403.9 684.5,405.5 686.0,403.9 687.5,405.5 689.0,403.9 690.5,405.5 692.0,403.9 693.5,405.5 695.0,403.9" fill="none" stroke="#3c3cc8" stroke-width="0.9"/><polyline points="786.3,419.6 787.8,421.2 789.3,419.6 790.8,421.2 792.3,419.6 793.8,421.2 795.3,419.6 796.8,421.2 798.3,419.6 799.8,421.2 801.3,419.6 802.8,421.2 804.3,419.6 805.8,421.2 807.3,419.6 808.8,421.2 810.3,419.6 811.8,421.2 813.3,419.6 814.8,421.2 816.3,419.6 817.8,421.2 819.3,419.6 820.8,421.2 822.3,419.6 823.8,421.2 825.3,419.6 826.8,421.2 828.3,419.6 829.8,421.2 831.3,419.6 832.8,421.2 834.3,419.6 835.8,421.2 837.3,419.6 838.8,421.2 840.3,419.6 841.8,421.2 843.3,419.6 844.8,421.2 846.3,419.6 847.8,421.2 849.3,419.6 850.8,421.2 852.3,419.6 853.8,421.2 855.3,419.6 856.8,421.2 858.3,419.6" fill="none" stroke="#3c3cc8" stroke-width="0.9"/><polyline points="548.9,538.6 550.4,540.2 551.9,538.6 553.4,540.2 554.9,538.6 556.4,540.2 557.9,538.6 559.4,540.2 560.9,538.6 562.4,540.2 563.9,538.6 565.4,540.2 566.9,538.6 568.4,540.2 569.9,538.6 571.4,540.2 572.9,538.6 574.4,540.2 575.9,538.6 577.4,540.2 578.9,538.6 580.4,540.2 581.9,538.6 583.4,540.2 584.9,538.6 586.4,540.2 587.9,538.6 589.4,540.2 590.9,538.6 592.4,540.2 593.9,538.6 595.4,540.2 596.9,538.6 598.4,540.2 599.9,538.6 601.4,540.2 602.9,538.6 604.4,540.2 605.9,538.6 607.4,540.2 608.9,538.6 610.4,540.2 611.9,538.6 613.4,540.2 614.9,538.6" fill="none" stroke="#e03030" stroke-width="0.9"/><polyline points="665.7,552.6 667.2,554.2 668.7,552.6 670.2,554.2 671.7,552.6 673.2,554.2 674.7,552.6 676.2,554.2 677.7,552.6 679.2,554.2 680.7,552.6 682.2,554.2 683.7,552.6 685.2,554.2 686.7,552.6 688.2,554.2 689.7,552.6 691.2,554.2 692.7,552.6 694.2,554.2 695.7,552.6 697.2,554.2 698.7,552.6 700.2,554.2 701.7,552.6 703.2,554.2 704.7,552.6 706.2,554.2 707.7,552.6 709.2,554.2 710.7,552.6 712.2,554.2 713.7,552.6 715.2,554.2 716.7,552.6 718.2,554.2 719.7,552.6 721.2,554.2 722.7,552.6 724.2,554.2 725.7,552.6 727.2,554.2 728.7,552.6 730.2,554.2 731.7,552.6 733.2,554.2" fill="none" stroke="#e03030" stroke-width="0.9"/><rect x="890.5" y="480" width="1" height="12" fill="#9a9a9a"/></svg>
<div class="t" style="left:6.60px;top:666.89px;font-size:11px;line-height:11px;color:#444444;font-weight:400;font-family:'Liberation Sans',sans-serif;transform:scaleX(0.9545);">Страница 1 из 1</div>
<div class="t" style="left:104.60px;top:666.89px;font-size:11px;line-height:11px;color:#444444;font-weight:400;font-family:'Liberation Sans',sans-serif;transform:scaleX(0.9258);">Число слов: 296</div>
<div class="t" style="left:229.80px;top:666.89px;font-size:11px;line-height:11px;color:#444444;font-weight:400;font-family:'Liberation Sans',sans-serif;transform:scaleX(0.9852);">русский</div>
<svg style="left:0px;top:0px" width="1280" height="720" viewBox="0 0 1280 720" ><path d="M203 666.5 H200.5 V676.5 H206.5 M203 666.5 L206.5 668 V676.5 M206.5 668 L208.5 666.5 H212.5 M206.5 676.5 H212.5" fill="none" stroke="#666" stroke-width="1.1"/><path d="M209.2 669.2 L212.6 673.6 M212.6 669.2 L209.2 673.6" fill="none" stroke="#555" stroke-width="1.2"/><path d="M205 677 H208 L206.5 678.5 Z" fill="#666"/><rect x="1042" y="663" width="36" height="19" fill="#c8c8c8"/><path d="M1017.5 667 H1023.5 V677 H1017.5 Z M1024 667 H1030 V677 H1024 Z" fill="#f5f5f5" stroke="#666" stroke-width="1"/><path d="M1019 669.5 H1022 M1019 671.5 H1022 M1019 673.5 H1022 M1025.5 669.5 H1028.5 M1025.5 671.5 H1028.5 M1025.5 673.5 H1028.5" stroke="#888" stroke-width="0.8"/><rect x="1053" y="666.5" width="13" height="11" fill="#e8e8e8" stroke="#666" stroke-width="1"/><path d="M1055 668.5 H1064 M1055 670.5 H1064 M1055 672.5 H1064 M1055 674.5 H1064 M1055 676.5 H1064" stroke="#888" stroke-width="1"/><path d="M1089 666.5 H1099 V672 M1089 666.5 V678 H1094" fill="none" stroke="#666" stroke-width="1"/><path d="M1091 669 H1097 M1091 671 H1096 M1091 673 H1094" stroke="#777" stroke-width="0.8"/><circle cx="1098.5" cy="675.5" r="3.3" fill="#f1f1f1" stroke="#555" stroke-width="1.1"/><path d="M1096.3 677.7 L1100.7 673.3" stroke="#555" stroke-width="1"/><rect x="1118" y="671.5" width="6" height="1.5" fill="#444"/><rect x="1128" y="671" width="93" height="1" fill="#a0a0a0"/><rect x="1174" y="669" width="1" height="5" fill="#888"/><rect x="1166" y="667" width="3.5" height="10" fill="#555"/><rect x="1224.5" y="671.5" width="8" height="1.5" fill="#444"/><rect x="1227.75" y="668.25" width="1.5" height="8" fill="#444"/></svg>
<div class="t" style="left:1246.60px;top:667.19px;font-size:11px;line-height:11px;color:#444444;font-weight:400;font-family:'Liberation Sans',sans-serif;transform:scaleX(0.8760);">86%</div>
<svg style="left:0px;top:0px" width="1280" height="720" viewBox="0 0 1280 720" ><rect x="367" y="682" width="45" height="38" fill="#3e4047"/><rect x="325" y="718" width="38" height="2" fill="#76b9ed"/><rect x="367" y="718" width="45" height="2" fill="#76b9ed"/><path d="M15 695.5 L21.8 694.5 V700.8 H15 Z M22.8 694.3 L30.5 693.2 V700.8 H22.8 Z M15 701.8 H21.8 V708 L15 707 Z M22.8 701.8 H30.5 V709.3 L22.8 708.2 Z" fill="#ffffff"/><circle cx="69.5" cy="698.5" r="5" fill="none" stroke="#fff" stroke-width="1.3"/><path d="M66 702 L60.5 707.5" stroke="#fff" stroke-width="1.5"/><path d="M105 694.5 H115 M105 708.5 H115 M105.5 698 V705 H114.5 V698 Z" fill="none" stroke="#fff" stroke-width="1.1"/><path d="M118 694 V697 M118 699 V709" stroke="#fff" stroke-width="1.3"/><path d="M152 701 C152 694 157 691.5 161 691.5 C166 691.5 169.5 695 169.5 700 V702.5 H157.5 C158 706 161 707.5 164 707.5 C166 707.5 168 707 169 706.3 V709.5 C167.5 710.3 165.5 710.7 163 710.7 C156 710.7 152 706 152 701 Z M157.5 699 H164.5 C164.5 696.5 163 695 161 695 C159 695 157.8 696.8 157.5 699 Z" fill="#1a7ed4"/><path d="M196.5 693.5 H204 L206 695.5 H216 V709 H196.5 Z" fill="#f3d37a"/><rect x="196.5" y="697" width="19.5" height="12" fill="#fbe7a2"/><rect x="202" y="701.5" width="9" height="5" fill="#2b8ed6"/><rect x="203.5" y="706.5" width="6" height="2.5" fill="#3aa0e8"/><path d="M241.5 697.5 H263 V712 H241.5 Z" fill="#ffffff"/><path d="M247 697.5 V695.5 A5.2 5.2 0 0 1 257.4 695.5 V697.5" fill="none" stroke="#fff" stroke-width="1.3"/><rect x="248.5" y="698.5" width="3.5" height="3.5" fill="#f25022"/><rect x="252.8" y="698.5" width="3.5" height="3.5" fill="#7fba00"/><rect x="248.5" y="702.8" width="3.5" height="3.5" fill="#00a4ef"/><rect x="252.8" y="702.8" width="3.5" height="3.5" fill="#ffb900"/><path d="M286.5 698.5 L297.5 692.5 L308.5 698.5 V710.5 H286.5 Z" fill="#ffffff"/><path d="M288 699 H307 L300 703 L303 706.5 L296.5 702.5 Z" fill="#1b1d23"/><path d="M343.80 701.80 L334.71 696.55 A10.50 10.50 0 0 1 352.89 696.55 Z" fill="#db4437"/><path d="M343.80 701.80 L352.89 696.55 A10.50 10.50 0 0 1 343.80 712.30 Z" fill="#f4c20d"/><path d="M343.80 701.80 L343.80 712.30 A10.50 10.50 0 0 1 334.71 696.55 Z" fill="#0f9d58"/><circle cx="343.8" cy="701.8" r="5" fill="#ffffff"/><circle cx="343.8" cy="701.8" r="3.9" fill="#4285f4"/><rect x="390" y="693" width="10.5" height="16" fill="#ffffff"/><path d="M392 696.5 H399.5 M392 699.5 H399.5 M392 702.5 H399.5 M392 705.5 H399.5" stroke="#6e8fc2" stroke-width="1"/><rect x="379" y="691" width="13" height="20" fill="#2b579a"/><text x="380.6" y="705" font-size="9" font-weight="bold" fill="#fff" font-family="Liberation Sans">W</text><circle cx="1027" cy="697" r="2.8" fill="none" stroke="#fff" stroke-width="1.2"/><circle cx="1020.5" cy="701" r="2.8" fill="none" stroke="#fff" stroke-width="1.2"/><path d="M1015.8 708.5 C1016.5 705 1018.5 704 1020.5 704 C1022.5 704 1024.5 705 1025.2 708.5 M1022.5 701.5 C1023.5 700.5 1025 700 1027 700 C1029.2 700 1031 701.5 1031.2 704.5" fill="none" stroke="#fff" stroke-width="1.2"/><path d="M1050.5 703.5 L1056 698 L1061.5 703.5" fill="none" stroke="#fff" stroke-width="1.3"/><rect x="1072" y="697" width="13.5" height="7.5" fill="none" stroke="#fff" stroke-width="1.2"/><rect x="1074" y="699" width="5.5" height="3.5" fill="#fff"/><rect x="1085.5" y="699" width="1.5" height="3.5" fill="#fff"/><path d="M1097 707 A10 10 0 0 1 1107 697 M1100 707 A7 7 0 0 1 1107 700 M1103 707 A4 4 0 0 1 1107 703" fill="none" stroke="#bbb" stroke-width="1.2"/><circle cx="1106.5" cy="706.5" r="1.5" fill="#fff"/><path d="M1116.5 699 H1119.5 L1123.5 695.5 V708.5 L1119.5 705 H1116.5 Z" fill="none" stroke="#fff" stroke-width="1.1"/><path d="M1126 699 Q1128 702 1126 705 M1128.5 697 Q1131.5 702 1128.5 707" fill="none" stroke="#bbb" stroke-width="1"/><path d="M1241.5 693.5 H1257.5 V704.5 H1247 L1243.5 707.5 V704.5 H1241.5 Z" fill="#ffffff"/><path d="M1244 696.5 H1255 M1244 699 H1255 M1244 701.5 H1251" stroke="#1b1d23" stroke-width="1"/><circle cx="1255.5" cy="707" r="7" fill="#1b1d23" stroke="#888" stroke-width="1"/><rect x="1277" y="682" width="1" height="38" fill="#555"/></svg>
<div class="t" style="left:1141.50px;top:695.77px;font-size:11.5px;line-height:11.5px;color:#ffffff;font-weight:400;font-family:'Liberation Sans',sans-serif;transform:scaleX(0.8684);">РУС</div>
<div class="t" style="left:1186.50px;top:687.77px;font-size:11.5px;line-height:11.5px;color:#ffffff;font-weight:400;font-family:'Liberation Sans',sans-serif;transform:scaleX(0.8512);">19:31</div>
<div class="t" style="left:1174.00px;top:704.27px;font-size:11.5px;line-height:11.5px;color:#ffffff;font-weight:400;font-family:'Liberation Sans',sans-serif;transform:scaleX(0.8860);">18.02.2019</div>
<div class="t" style="left:1252.50px;top:702.53px;font-size:10px;line-height:10px;color:#ffffff;font-weight:700;font-family:'Liberation Sans',sans-serif;transform:scaleX(1.0787);">6</div></body></html>
